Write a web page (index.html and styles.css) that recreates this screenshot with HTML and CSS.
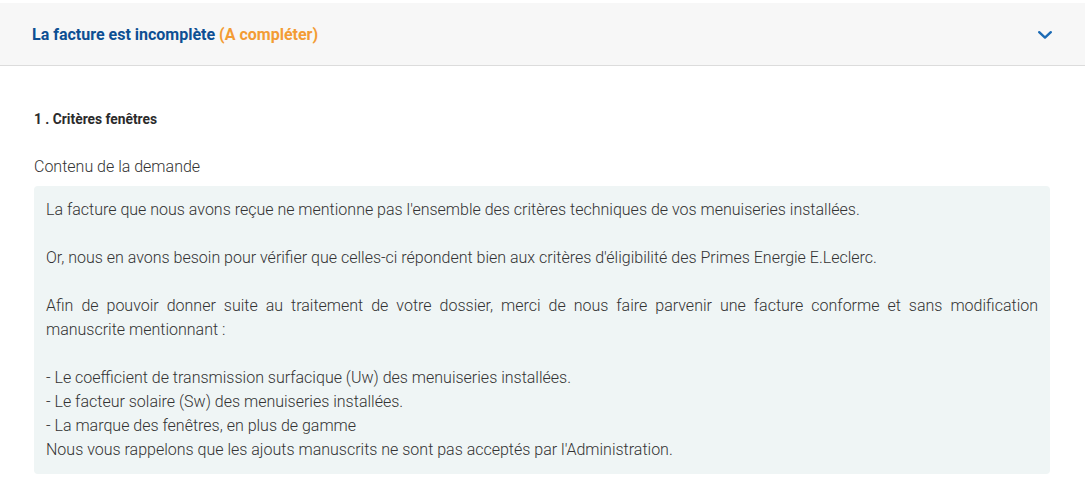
FILE: index.html
```html
<!DOCTYPE html>
<html lang="fr">
<head>
<meta charset="utf-8">
<link rel="stylesheet" href="styles.css">
</head>
<body>
<div class="card">
  <div class="card-header">
    <div class="title">La facture est incomplète <span class="status">(A compléter)</span></div>
    <svg class="chevron" width="14" height="8" viewBox="0 0 14 8"><path d="M1.2 1.2 L7 6.6 L12.8 1.2" fill="none" stroke="#1c6bb5" stroke-width="2.4" stroke-linecap="round" stroke-linejoin="round"/></svg>
  </div>
  <div class="card-body">
    <div class="section-title">1 . Critères fenêtres</div>
    <div class="label">Contenu de la demande</div>
    <div class="message">La facture que nous avons reçue ne mentionne pas l'ensemble des critères techniques de vos menuiseries installées.

Or, nous en avons besoin pour vérifier que celles-ci répondent bien aux critères d'éligibilité des Primes Energie E.Leclerc.

Afin de pouvoir donner suite au traitement de votre dossier, merci de nous faire parvenir une facture conforme et sans modification manuscrite mentionnant :

- Le coefficient de transmission surfacique (Uw) des menuiseries installées.
- Le facteur solaire (Sw) des menuiseries installées.
- La marque des fenêtres, en plus de gamme
Nous vous rappelons que les ajouts manuscrits ne sont pas acceptés par l'Administration.</div>
  </div>
</div>
</body>
</html>
```

FILE: styles.css
```css
html, body {
  margin: 0;
  padding: 0;
  background: #ffffff;
  font-family: Roboto, "Liberation Sans", Arial, sans-serif;
}
.card {
  padding-top: 3px;
}
.card-header {
  height: 62px;
  background: #f7f7f7;
  border-bottom: 1px solid #dcdcdc;
  display: flex;
  align-items: center;
  justify-content: space-between;
  padding: 0 33px 0 32px;
}
.title {
  font-size: 16px;
  font-weight: 700;
  color: #0d4f93;
}
.status {
  color: #f39c34;
}
.chevron {
  display: block;
  margin-top: 1px;
}
.card-body {
  padding: 43px 35px 0 34px;
}
.section-title {
  font-size: 13.8px;
  font-weight: 700;
  color: #2b2b2b;
  line-height: 20px;
}
.label {
  margin-top: 28px;
  font-size: 16px;
  font-weight: 300;
  color: #333333;
  line-height: 20px;
}
.message {
  margin-top: 9px;
  background: #eff5f5;
  border-radius: 4px;
  padding: 12px 12px;
  white-space: pre-line;
  text-align: justify;
  font-size: 16px;
  font-weight: 300;
  color: #333333;
  line-height: 24px;
}
```
